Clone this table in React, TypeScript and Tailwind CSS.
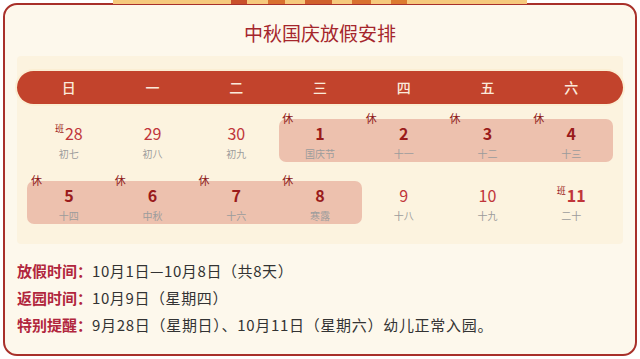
import React from 'react';

type Day = { num: string; lunar: string; tag?: '休' | '班'; holiday?: boolean };

const weekDays = ['日', '一', '二', '三', '四', '五', '六'];

const row1: Day[] = [
  { num: '28', lunar: '初七', tag: '班' },
  { num: '29', lunar: '初八' },
  { num: '30', lunar: '初九' },
  { num: '1', lunar: '国庆节', tag: '休', holiday: true },
  { num: '2', lunar: '十一', tag: '休', holiday: true },
  { num: '3', lunar: '十二', tag: '休', holiday: true },
  { num: '4', lunar: '十三', tag: '休', holiday: true },
];

const row2: Day[] = [
  { num: '5', lunar: '十四', tag: '休', holiday: true },
  { num: '6', lunar: '中秋', tag: '休', holiday: true },
  { num: '7', lunar: '十六', tag: '休', holiday: true },
  { num: '8', lunar: '寒露', tag: '休', holiday: true },
  { num: '9', lunar: '十八' },
  { num: '10', lunar: '十九' },
  { num: '11', lunar: '二十', tag: '班' },
];

// top ornament strip, widths in px
const strip: [number, string][] = [
  [118, '#f6c97c'], [16, '#c9502b'], [21, '#f6c97c'], [17, '#d9702f'], [20, '#f6c97c'],
  [27, '#d0602c'], [20, '#f6c97c'], [19, '#d9702f'], [20, '#f6c97c'], [16, '#dc7a30'], [120, '#f6c97c'],
];

const Cell: React.FC<{ d: Day; col: string }> = ({ d, col }) => (
  <div className={`${col} row-start-1 relative flex flex-col items-center pt-[4px]`}>
    {d.tag === '休' && (
      <span className="absolute left-[4px] top-[-6px] text-[11px] leading-none text-[#8e1a1a]">休</span>
    )}
    <div className="flex items-start h-[20px]">
      {d.tag === '班' && <span className="text-[9px] leading-none text-[#9a1c1c] mt-[1px] mr-[1px]">班</span>}
      <span
        className={`text-[16px] leading-[20px] ${d.holiday ? 'font-bold text-[#9a1b1b]' : 'text-[#c0353a]'} ${
          d.num === '11' ? 'font-semibold text-[#a82020]' : ''
        }`}
      >
        {d.num}
      </span>
    </div>
    <span className="mt-[4px] text-[10px] leading-[14px] text-[#9c9c9c]">{d.lunar}</span>
  </div>
);

const cols = ['col-start-1', 'col-start-2', 'col-start-3', 'col-start-4', 'col-start-5', 'col-start-6', 'col-start-7'];

const App: React.FC = () => {
  return (
    <div
      className="w-[640px] h-[359px] bg-white relative overflow-hidden"
      style={{ fontFamily: '"Noto Sans CJK SC", "Noto Sans", sans-serif' }}
    >
      <div className="absolute top-0 left-[113px] flex h-[4px]">
        {strip.map(([w, c], i) => (
          <div key={i} style={{ width: w, background: c }} />
        ))}
      </div>

      <div className="mx-[3px] mt-[3px] h-[353px] border-2 border-[#a8302a] rounded-[14px] bg-[#fdf8ec] px-[12px] pt-[15px]">
        <h1 className="text-center text-[19px] leading-[26px] text-[#a5262c]">中秋国庆放假安排</h1>

        <div className="mt-[10px] bg-[#fcf3df] rounded-[4px] pt-[15px] pb-[20px]">
          <div className="h-[33px] rounded-full bg-[#c2432c] grid grid-cols-7 px-[10px] items-center shadow-[0_0_0_2px_#fbeed3]">
            {weekDays.map(w => (
              <span key={w} className="text-center text-[14px] font-medium text-[#fbeadb]">
                {w}
              </span>
            ))}
          </div>

          <div className="px-[10px] mt-[15px] grid grid-cols-7 h-[43px]">
            <div className="col-start-4 col-span-4 row-start-1 bg-[#edc1ae] rounded-[7px] ml-[1px]" />
            {row1.map((d, i) => (
              <Cell key={i} d={d} col={cols[i]} />
            ))}
          </div>

          <div className="px-[10px] mt-[19px] grid grid-cols-7 h-[43px]">
            <div className="col-start-1 col-span-4 row-start-1 bg-[#edc1ae] rounded-[7px]" />
            {row2.map((d, i) => (
              <Cell key={i} d={d} col={cols[i]} />
            ))}
          </div>
        </div>

        <div className="mt-[16px] flex flex-col gap-[5px] text-[15px] leading-[22px] text-[#333]">
          <p>
            <span className="font-bold text-[#b1263d]">放假时间：</span>
            <span className="tracking-[0.6px]">10月1日—10月8日（共8天）</span>
          </p>
          <p>
            <span className="font-bold text-[#b1263d]">返园时间：</span>
            <span className="tracking-[0.6px]">10月9日（星期四）</span>
          </p>
          <p>
            <span className="font-bold text-[#b1263d]">特别提醒：</span>
            <span className="tracking-[0.7px]">9月28日（星期日）、10月11日（星期六）幼儿正常入园。</span>
          </p>
        </div>
      </div>
    </div>
  );
};

export default App;
